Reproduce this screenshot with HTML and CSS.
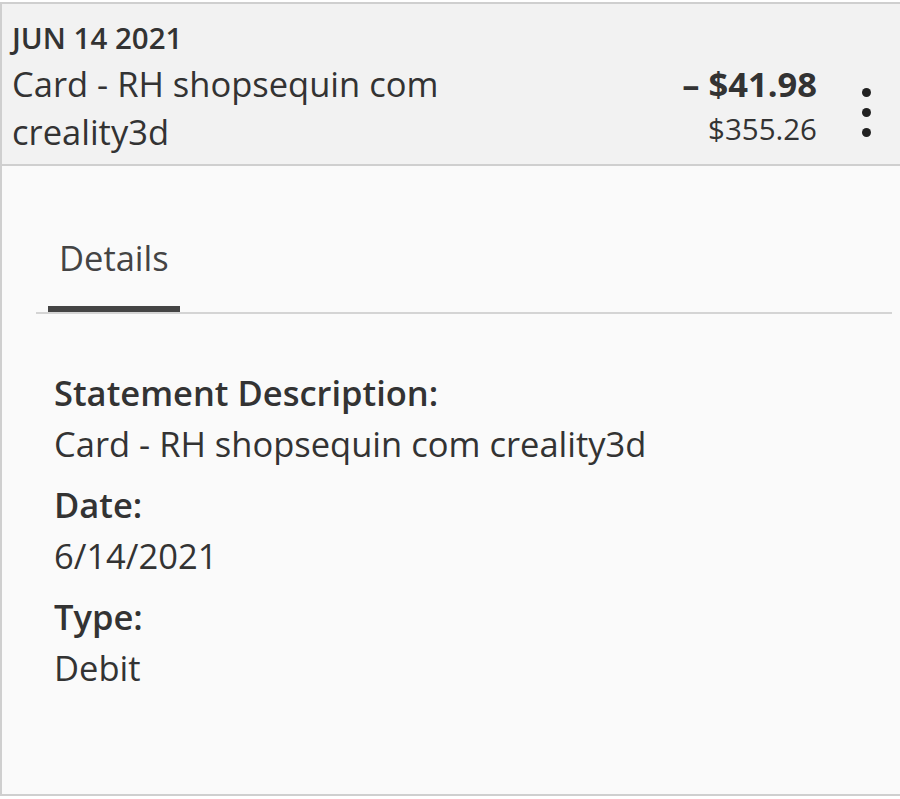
FILE: index.html
```html
<!DOCTYPE html>
<html lang="en">
<head>
  <meta charset="UTF-8" />
  <meta name="viewport" content="width=device-width, initial-scale=1.0"/>
  <title>Transaction Details</title>
  <link rel="stylesheet" href="styles.css">
</head>
<body>
  <div class="txn-card">
    <!-- Transaction summary row -->
    <div class="txn-head">
      <div class="txn-info">
        <div class="txn-date">JUN 14 2021</div>
        <div class="txn-desc">Card - RH shopsequin com creality3d</div>
      </div>
      <div class="txn-amounts">
        <div class="txn-amount">– $41.98</div>
        <div class="txn-balance">$355.26</div>
      </div>
      <button class="more-btn" aria-label="More options">
        <span class="dot"></span>
        <span class="dot"></span>
        <span class="dot"></span>
      </button>
    </div>

    <div class="tabs">
      <div class="tab active">Details</div>
    </div>

    <div class="details">
      <div class="field">
        <div class="label">Statement Description:</div>
        <div class="value">Card - RH shopsequin com creality3d</div>
      </div>
      <div class="field">
        <div class="label">Date:</div>
        <div class="value">6/14/2021</div>
      </div>
      <div class="field">
        <div class="label">Type:</div>
        <div class="value">Debit</div>
      </div>
    </div>
  </div>
</body>
</html>
```

FILE: styles.css
```css
body {
  margin: 0;
  background: #ffffff;
  font-family: 'Open Sans', sans-serif;
  color: #333;
}

.txn-card {
  margin-top: 2px;
  height: 794px;
  box-sizing: border-box;
  border-top: 2px solid #cfcfcf;
  border-left: 2px solid #cfcfcf;
  border-bottom: 2px solid #cfcfcf;
  background: #fafafa;
}

.txn-head {
  display: flex;
  align-items: flex-start;
  background: #f2f2f2;
  border-bottom: 2px solid #cfcfcf;
  height: 162px;
  padding: 12px 0 0 10px;
  box-sizing: border-box;
}

.txn-info {
  flex: 1;
}

.txn-date {
  font-size: 29.5px;
  font-weight: 600;
  line-height: 44px;
}

.txn-desc {
  max-width: 460px;
  font-size: 34.5px;
  line-height: 48px;
}

.txn-amounts {
  text-align: right;
  padding-top: 44px;
}

.txn-amount {
  font-size: 34.5px;
  font-weight: 700;
  line-height: 48px;
}

.txn-balance {
  font-size: 29.5px;
  line-height: 41px;
}

.more-btn {
  display: flex;
  flex-direction: column;
  align-items: center;
  gap: 11px;
  width: 26px;
  margin: 72px 21px 0 36px;
  padding: 0;
  border: none;
  background: none;
}

.dot {
  width: 9px;
  height: 9px;
  border-radius: 50%;
  background: #222;
}

.tabs {
  display: flex;
  margin: 68px 8px 0 34px;
  border-bottom: 2px solid #d4d4d4;
}

.tab {
  margin-left: 12px;
  padding: 0 11px 24px;
  font-size: 34.5px;
  line-height: 48px;
  color: #444;
  border-bottom: 6px solid #444;
}

.details {
  padding: 53px 0 0 52px;
}

.field {
  margin-bottom: 10px;
}

.label {
  font-size: 34.5px;
  font-weight: 600;
  line-height: 51px;
}

.value {
  font-size: 34.5px;
  line-height: 51px;
}
```
